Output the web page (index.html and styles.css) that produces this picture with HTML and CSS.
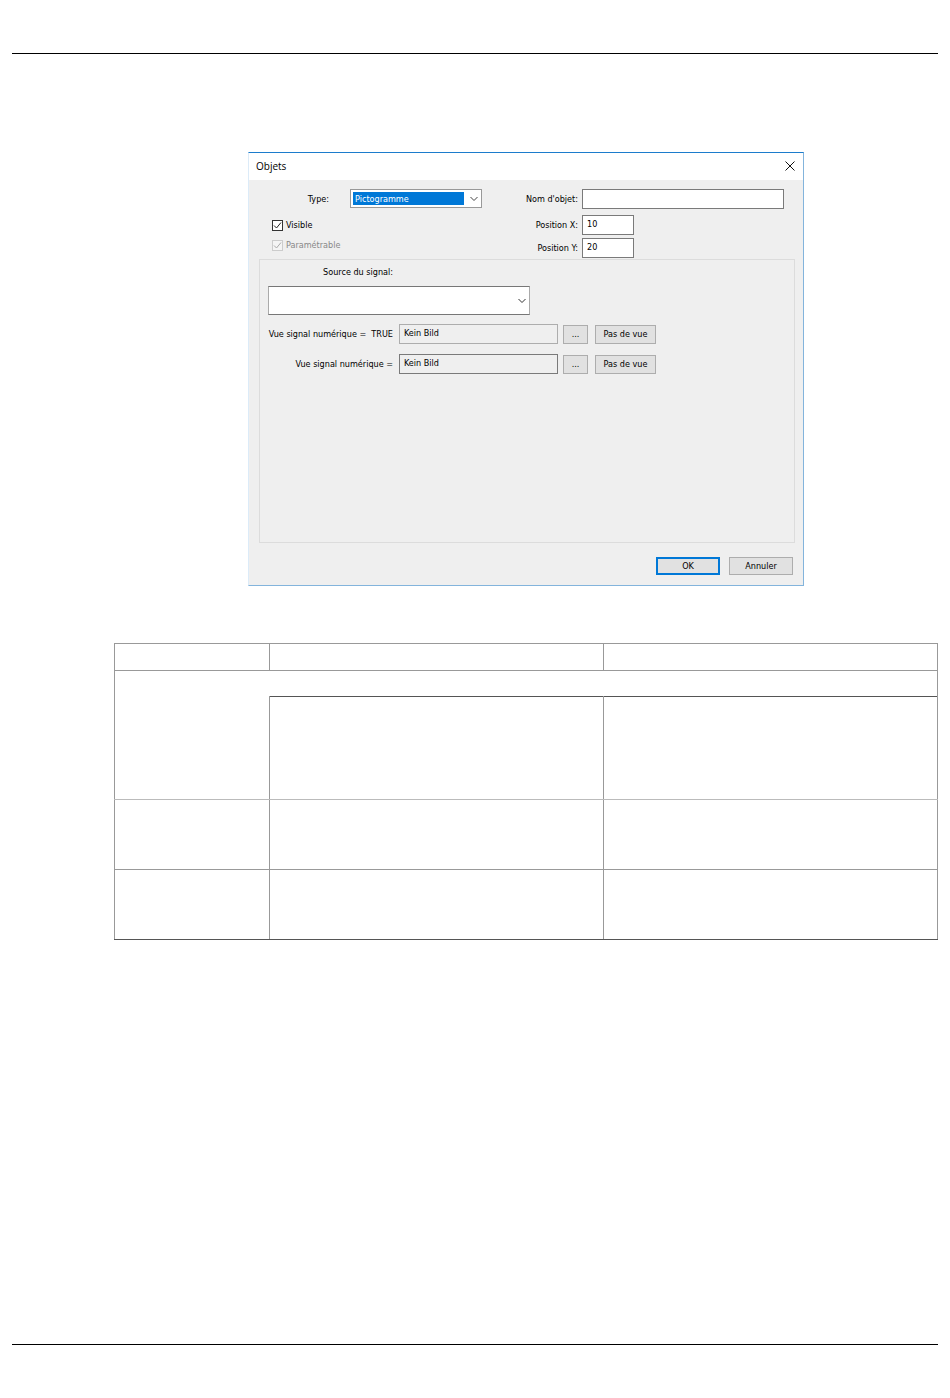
FILE: index.html
```html
<!DOCTYPE html>
<html lang="fr">
<head>
<meta charset="utf-8">
<meta name="viewport" content="width=device-width, initial-scale=1">
<title>Objets</title>
<link rel="stylesheet" href="styles.css">
</head>
<body>
<header class="page-header"></header>
<main class="content">
  <form class="dialog">
    <div class="titlebar">
      <h1 class="title">Objets</h1>
      <button class="close" type="button" aria-label="Fermer">
        <svg width="10" height="10" viewBox="0 0 10 10"><path d="M.5.5l9 9M9.5.5l-9 9" fill="none" stroke="#111" stroke-width="1"/></svg>
      </button>
    </div>
    <div class="general">
      <div class="general-left">
        <div class="type-row">
          <label for="type">Type:</label>
          <div class="combo">
            <select id="type" class="select select-active"><option>Pictogramme</option></select>
            <svg class="arrow" width="8" height="5" viewBox="0 0 8 5"><path d="M.5.5L4 4 7.500.5" fill="none" stroke="#444"/></svg>
          </div>
        </div>
        <label class="check">
          <input type="checkbox" checked>
          <svg class="tick" width="11" height="11" viewBox="0 0 11 11"><path d="M2 5.500l2.500 2.500L9 2.500" fill="none" stroke="#222"/></svg>
          Visible
        </label>
        <label class="check check-off">
          <input type="checkbox" checked disabled>
          <svg class="tick" width="11" height="11" viewBox="0 0 11 11"><path d="M2 5.500l2.500 2.500L9 2.500" fill="none" stroke="#aaa"/></svg>
          Paramétrable
        </label>
      </div>
      <div class="general-right">
        <label for="name">Nom d'objet:</label>
        <input id="name" class="text name" type="text">
        <label for="posx">Position X:</label>
        <input id="posx" class="text short" type="text" value="10">
        <label for="posy">Position Y:</label>
        <input id="posy" class="text short" type="text" value="20">
      </div>
    </div>
    <div class="group">
      <label class="source-label" for="source">Source du signal:</label>
      <div class="combo source">
        <select id="source" class="select select-tall"><option></option></select>
        <svg class="arrow" width="8" height="5" viewBox="0 0 8 5"><path d="M.5.5L4 4 7.500.5" fill="none" stroke="#333"/></svg>
      </div>
      <div class="view-row">
        <label class="view-label" for="view-true">Vue signal numérique =&nbsp; TRUE</label>
        <input id="view-true" class="text readonly light" type="text" value="Kein Bild" readonly>
        <button class="button browse" type="button">...</button>
        <button class="button clear" type="button">Pas de vue</button>
      </div>
      <div class="view-row">
        <label class="view-label" for="view-false">Vue signal numérique =</label>
        <input id="view-false" class="text readonly" type="text" value="Kein Bild" readonly>
        <button class="button browse" type="button">...</button>
        <button class="button clear" type="button">Pas de vue</button>
      </div>
    </div>
    <div class="actions">
      <button class="button action default" type="button">OK</button>
      <button class="button action" type="button">Annuler</button>
    </div>
  </form>
  <table class="params">
    <colgroup><col class="col-name"><col><col></colgroup>
    <tr class="row-head"><td></td><td></td><td></td></tr>
    <tr class="row-section"><td class="open" colspan="3"></td></tr>
    <tr class="row-large"><td class="joined"></td><td class="under-section"></td><td class="under-section"></td></tr>
    <tr class="row-medium faint"><td></td><td></td><td></td></tr>
    <tr class="row-medium last"><td></td><td></td><td></td></tr>
  </table>
</main>
<footer class="page-footer"></footer>
</body>
</html>
```

FILE: styles.css
```css
* { box-sizing: border-box; }

body {
  margin: 0;
  padding: 0 12px;
  min-height: 100vh;
  display: flex;
  flex-direction: column;
  background: #fff;
  color: #000;
  font: 9px/14px "DejaVu Sans Condensed", "Noto Sans", sans-serif;
}

input, select, button { font: inherit; color: inherit; margin: 0; border-radius: 0; }

.page-header { height: 54px; border-bottom: 1px solid #000; }
.page-footer { height: 54px; border-top: 1px solid #000; }

.content {
  flex: 1;
  margin-left: 102px;
  padding-top: 98px;
}

.dialog {
  width: 556px;
  max-width: 100%;
  margin: 0 auto 57px;
  background: #efefef;
  border: 1px solid #83b4dc;
  border-top-color: #1c7ccc;
  border-left-color: #dcebf8;
}

.titlebar {
  display: flex;
  align-items: center;
  justify-content: space-between;
  height: 27px;
  padding: 0 8px 2px 7px;
  background: #fff;
}
.title { margin: 0; font: 10px/14px "Open Sans", sans-serif; }
.close { display: flex; padding: 0; border: 0; background: none; }

.general {
  display: grid;
  grid-template-columns: 210px 1fr;
  height: 79px;
  padding: 9px 19px 0 23px;
}
.type-row { display: flex; align-items: center; justify-content: flex-end; gap: 21px; margin-bottom: 10px; }

.combo { position: relative; }
.select {
  display: block;
  appearance: none;
  width: 132px;
  height: 19px;
  padding: 0 18px 0 4px;
  border: 1px solid #999;
  background: #fff;
}
.select-active {
  color: #fff;
  background: linear-gradient(#0078d7, #0078d7) 2px 2px / 111px 13px no-repeat #fff;
}
.select-tall { width: 100%; height: 29px; border-color: #777 #aaa; }
.arrow { position: absolute; right: 4px; top: 50%; transform: translateY(-50%); pointer-events: none; }

.check { position: relative; display: flex; align-items: center; gap: 3px; height: 14px; margin-bottom: 6px; }
.check input { appearance: none; width: 11px; height: 11px; border: 1px solid #333; background: #fff; }
.tick { position: absolute; left: 0; }
.check-off { color: #888; }
.check-off input { border-color: #ccc; background: #f4f4f4; }

.general-right {
  display: grid;
  grid-template-columns: 96px 1fr;
  grid-template-rows: 23px 20px 20px;
  column-gap: 4px;
  row-gap: 3px;
  align-items: start;
  text-align: right;
  line-height: 20px;
}
.text { height: 20px; padding: 0 4px 2px; border: 1px solid #7a7a7a; background: #fff; }
.name { width: 100%; }
.short { width: 52px; }

.group {
  height: 284px;
  margin: 0 8px 0 10px;
  padding: 5px 8px;
  border: 1px solid #dcdcdc;
}
.source-label { display: block; width: 125px; text-align: right; }
.source { width: 262px; margin: 7px 0 9px; }
.view-row { display: flex; align-items: center; margin-bottom: 10px; }
.view-label { width: 125px; text-align: right; white-space: nowrap; }
.readonly { width: 159px; margin: 0 5px 0 6px; background: #efefef; }
.light { border-color: #adadad; }

.button {
  height: 19px;
  padding: 0;
  border: 1px solid #adadad;
  background: #e1e1e1;
  line-height: 14px;
}
.browse { width: 25px; margin-right: 7px; }
.clear { width: 61px; }
.actions { display: flex; justify-content: flex-end; gap: 9px; padding: 14px 10px 10px 0; }
.action { width: 64px; height: 18px; }
.default { border: 2px solid #0078d7; line-height: 12px; }

.params { width: 100%; table-layout: fixed; border-collapse: collapse; }
.params td { padding: 0; border: 1px solid #999; }
.params .col-name { width: 155px; }
.row-head { height: 27px; }
.row-section { height: 26px; }
.row-large { height: 103px; }
.row-medium { height: 70px; }
.params .open { border-bottom: 0; }
.params .joined { border-top: 0; border-bottom-color: #bbb; }
.params .under-section { border-top-color: #555; border-bottom-color: #bbb; }
.params .faint td { border-top-color: #bbb; }
.params .last td { border-bottom-color: #555; }
```
